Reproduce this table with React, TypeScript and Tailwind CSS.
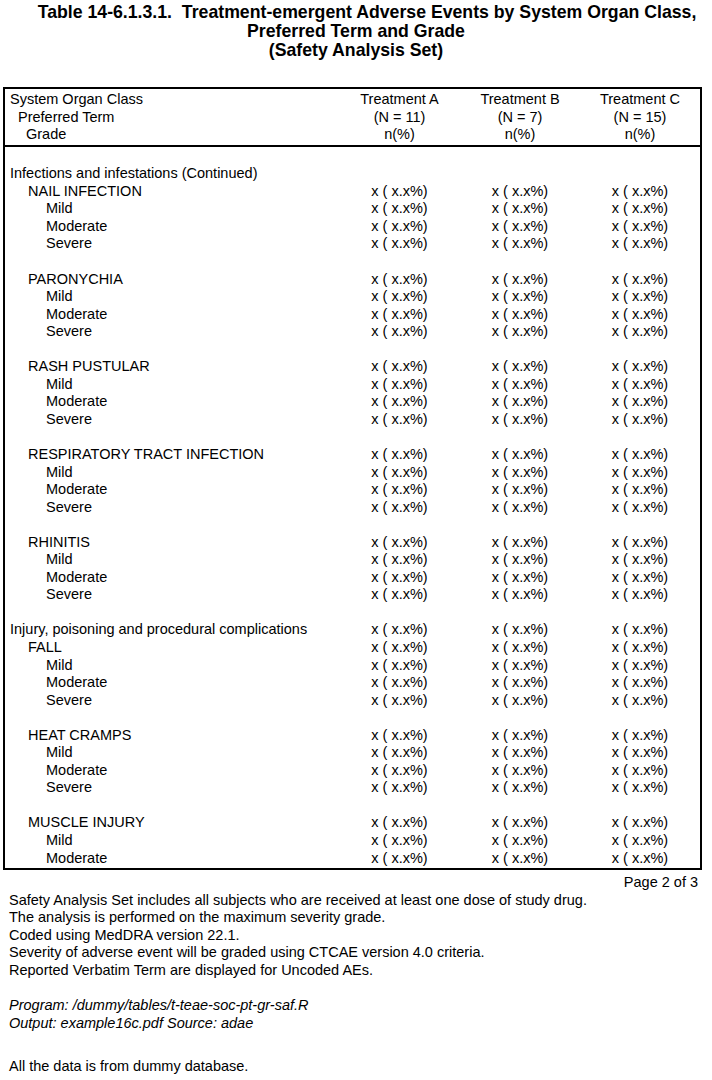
const soc = [
  {
    name: "Infections and infestations (Continued)",
    continued: true,
    terms: ["NAIL INFECTION", "PARONYCHIA", "RASH PUSTULAR", "RESPIRATORY TRACT INFECTION", "RHINITIS"],
  },
  {
    name: "Injury, poisoning and procedural complications",
    continued: false,
    terms: ["FALL", "HEAT CRAMPS", "MUSCLE INJURY"],
  },
];

const grades = ["Mild", "Moderate", "Severe"];

type Row = { label: string; level: number; values: boolean };

function buildRows(): Row[] {
  const rows: Row[] = [{ label: "", level: 0, values: false }];
  soc.forEach((s, si) => {
    if (si > 0) rows.push({ label: "", level: 0, values: false });
    // a continued SOC row carries no counts
    rows.push({ label: s.name, level: 0, values: !s.continued });
    s.terms.forEach((t, ti) => {
      if (ti > 0) rows.push({ label: "", level: 0, values: false });
      rows.push({ label: t, level: 1, values: true });
      grades.forEach((g) => rows.push({ label: g, level: 2, values: true }));
    });
  });
  // page breaks after "Moderate"
  return rows.slice(0, rows.length - 1);
}

const indent = ["pl-[5px]", "pl-[23px]", "pl-[41px]"];

export default function App() {
  const rows = buildRows();
  return (
    <div className="w-[712px] min-h-[1080px] bg-white text-black font-['Liberation_Sans',Arial,sans-serif]">
      {/* Title */}
      <div className="pt-[3px] text-center font-bold text-[17.7px] leading-[19px] pl-[22px]">
        <p className="whitespace-pre">Table 14-6.1.3.1.  Treatment-emergent Adverse Events by System Organ Class,</p>
        <p className="-ml-[22px]">Preferred Term and Grade</p>
        <p className="-ml-[22px]">(Safety Analysis Set)</p>
      </div>

      {/* Table box */}
      <div className="mt-[27px] ml-[3px] w-[699px] border-2 border-black text-[14.5px] leading-[17.56px]">
        <div className="grid grid-cols-[1fr_121px_120px_120px] pt-[2px] pb-[1px] border-b-2 border-black">
          <div className="pl-[5px]">
            <p>System Organ Class</p>
            <p className="pl-[8px]">Preferred Term</p>
            <p className="pl-[16px]">Grade</p>
          </div>
          {[
            ["Treatment A", "(N = 11)"],
            ["Treatment B", "(N = 7)"],
            ["Treatment C", "(N = 15)"],
          ].map(([t, n]) => (
            <div key={t} className="text-center">
              <p>{t}</p>
              <p>{n}</p>
              <p>n(%)</p>
            </div>
          ))}
        </div>
        <div className="pt-[1px] pb-[1px]">
          {rows.map((r, i) => (
            <div key={i} className="grid grid-cols-[1fr_121px_120px_120px] h-[17.56px]">
              <div className={indent[r.level]}>{r.label}</div>
              {r.values &&
                [0, 1, 2].map((c) => (
                  <div key={c} className="text-center whitespace-pre">
                    x ( x.x%)
                  </div>
                ))}
            </div>
          ))}
        </div>
      </div>

      {/* Page number */}
      <div className="w-[698px] text-right text-[14.5px] leading-[17.56px] pt-[4px]">Page 2 of 3</div>

      {/* Footnotes */}
      <div className="pl-[9px] text-[14.5px] leading-[17.56px]">
        <p>Safety Analysis Set includes all subjects who are received at least one dose of study drug.</p>
        <p>The analysis is performed on the maximum severity grade.</p>
        <p>Coded using MedDRA version 22.1.</p>
        <p>Severity of adverse event will be graded using CTCAE version 4.0 criteria.</p>
        <p>Reported Verbatim Term are displayed for Uncoded AEs.</p>
        <p className="h-[17.56px]"></p>
        <p className="italic">Program: /dummy/tables/t-teae-soc-pt-gr-saf.R</p>
        <p className="italic">Output: example16c.pdf Source: adae</p>
        <p className="mt-[26px]">All the data is from dummy database.</p>
      </div>
    </div>
  );
}
